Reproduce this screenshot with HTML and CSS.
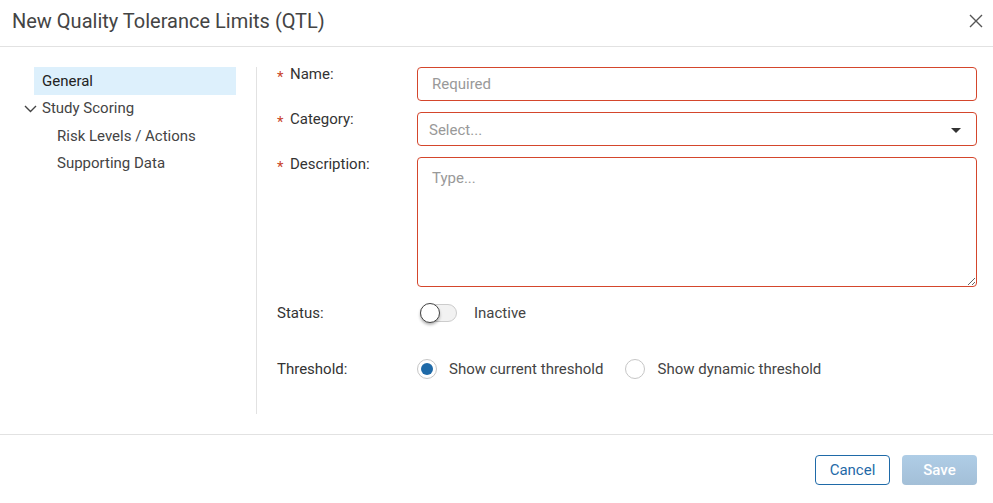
FILE: index.html
```html
<!DOCTYPE html>
<html lang="en">
<head>
  <meta charset="UTF-8">
  <title>New Quality Tolerance Limits (QTL)</title>
  <link rel="stylesheet" href="styles.css">
</head>
<body>
  <div class="dialog">
    <div class="dialog-header">
      <h1>New Quality Tolerance Limits (QTL)</h1>
      <button class="close-btn" aria-label="Close">
        <svg width="14" height="14" viewBox="0 0 14 14"><path d="M1 1L13 13M13 1L1 13" stroke="#555" stroke-width="1.4" fill="none"/></svg>
      </button>
    </div>

    <div class="dialog-body">
      <nav class="side-nav">
        <div class="nav-item active">General</div>
        <div class="nav-item parent">
          <svg class="chevron" width="13" height="8" viewBox="0 0 13 8"><path d="M1 1L6.5 6.5L12 1" stroke="#444" stroke-width="1.4" fill="none"/></svg>
          Study Scoring
        </div>
        <div class="nav-item child">Risk Levels / Actions</div>
        <div class="nav-item child">Supporting Data</div>
      </nav>

      <div class="form">
        <div class="row">
          <label class="field-label"><span class="req">*</span>Name:</label>
          <div class="control"><input class="text-input invalid" type="text" placeholder="Required"></div>
        </div>
        <div class="row">
          <label class="field-label"><span class="req">*</span>Category:</label>
          <div class="control">
            <div class="select invalid">
              <span class="placeholder">Select...</span>
              <span class="caret"></span>
            </div>
          </div>
        </div>
        <div class="row">
          <label class="field-label"><span class="req">*</span>Description:</label>
          <div class="control"><textarea class="textarea invalid" placeholder="Type..."></textarea></div>
        </div>
        <div class="row row-status">
          <label class="field-label plain">Status:</label>
          <div class="control inline">
            <span class="toggle"><span class="knob"></span></span>
            <span class="option-text">Inactive</span>
          </div>
        </div>
        <div class="row row-threshold">
          <label class="field-label plain">Threshold:</label>
          <div class="control inline">
            <span class="radio checked"></span>
            <span class="option-text">Show current threshold</span>
            <span class="radio"></span>
            <span class="option-text">Show dynamic threshold</span>
          </div>
        </div>
      </div>
    </div>

    <div class="dialog-footer">
      <button class="btn btn-outline">Cancel</button>
      <button class="btn btn-primary" disabled>Save</button>
    </div>
  </div>
</body>
</html>
```

FILE: styles.css
```css
body {
  margin: 0;
  font-family: Roboto, "Liberation Sans", Arial, sans-serif;
  font-size: 15px;
  color: #333;
  background: #fff;
}

.dialog {
  width: 993px;
  height: 503px;
  display: flex;
  flex-direction: column;
}

.dialog-header {
  height: 46px;
  border-bottom: 1px solid #e2e2e2;
  display: flex;
  align-items: center;
  justify-content: space-between;
  padding: 0 9px 0 12px;
}

.dialog-header h1 {
  margin: 0;
  font-size: 20px;
  font-weight: 400;
  color: #444;
  position: relative;
  top: -2px;
}

.close-btn {
  border: none;
  background: none;
  padding: 0;
  width: 16px;
  height: 16px;
  display: flex;
  align-items: center;
  justify-content: center;
  margin-top: -4px;
}

.dialog-body {
  flex: 1;
  display: flex;
  padding-top: 20px;
  border-bottom: 1px solid #e2e2e2;
}

.side-nav {
  width: 202px;
  padding-left: 34px;
  padding-right: 20px;
  border-right: 1px solid #e2e2e2;
  margin-bottom: 20px;
}

.nav-item {
  height: 27px;
  line-height: 27px;
  color: #444;
  padding-left: 8px;
  position: relative;
}

.nav-item.active {
  background: #ddf0fc;
  color: #222;
  height: 28px;
  line-height: 28px;
}

.nav-item.parent {
  color: #444;
  line-height: 26px;
}

.chevron {
  position: absolute;
  left: -10px;
  top: 10px;
}

.nav-item.child {
  padding-left: 23px;
  line-height: 29px;
}

.form {
  flex: 1;
  padding-left: 20px;
  padding-right: 16px;
}

.row {
  display: flex;
  margin-bottom: 11px;
}

.field-label {
  width: 140px;
  flex-shrink: 0;
  color: #333;
  padding-top: 0;
  line-height: 14px;
}

.req {
  color: #c9432a;
  display: inline-block;
  width: 13px;
  font-size: 15px;
  position: relative;
  top: 3px;
}

.control {
  flex: 1;
}

.text-input,
.select,
.textarea {
  box-sizing: border-box;
  width: 100%;
  border: 1px solid #d4462c;
  border-radius: 4px;
  font-family: inherit;
  font-size: 15px;
  background: #fff;
  outline: none;
}

.text-input {
  height: 34px;
  padding: 0 14px;
}

.text-input::placeholder,
.textarea::placeholder {
  color: #999;
}

.select {
  height: 34px;
  display: flex;
  align-items: center;
  justify-content: space-between;
  padding: 2px 15px 0 11px;
}

.placeholder {
  color: #999;
}

.caret {
  width: 0;
  height: 0;
  border-left: 5px solid transparent;
  border-right: 5px solid transparent;
  border-top: 5px solid #333;
}

.textarea {
  height: 130px;
  padding: 11px 14px;
  resize: vertical;
  display: block;
}

.row-status {
  margin-top: 5px;
  height: 30px;
  align-items: center;
}

.row-threshold {
  margin-top: 26px;
  height: 30px;
  align-items: center;
}

.row-status .field-label,
.row-threshold .field-label {
  line-height: 20px;
}

.inline {
  display: flex;
  align-items: center;
}

.toggle {
  width: 37px;
  height: 18px;
  border: 1px solid #ccc;
  border-radius: 10px;
  background: #f2f2f2;
  position: relative;
  margin-left: 3px;
  box-sizing: border-box;
}

.knob {
  position: absolute;
  left: -1px;
  top: -2px;
  width: 20px;
  height: 20px;
  box-sizing: border-box;
  border-radius: 50%;
  border: 1px solid #444;
  background: #fff;
  box-shadow: 0 2px 3px rgba(0, 0, 0, 0.3);
}

.option-text {
  color: #444;
  margin-left: 17px;
}

.radio {
  width: 20px;
  height: 20px;
  box-sizing: border-box;
  border: 1px solid #c6c6c6;
  border-radius: 50%;
  background: #fff;
  position: relative;
}

.radio + .option-text {
  margin-left: 12px;
}

.option-text + .radio {
  margin-left: 22px;
}

.radio.checked::after {
  content: "";
  position: absolute;
  left: 3px;
  top: 3px;
  width: 12px;
  height: 12px;
  border-radius: 50%;
  background: #1f6aa8;
}

.dialog-footer {
  height: 68px;
  display: flex;
  align-items: center;
  justify-content: flex-end;
  gap: 12px;
  padding-right: 16px;
  padding-top: 2px;
  box-sizing: border-box;
}

.btn {
  height: 30px;
  border-radius: 4px;
  font-family: inherit;
  font-size: 15px;
  padding: 0;
  cursor: pointer;
}

.btn-outline {
  width: 75px;
  border: 1px solid #1f6aa8;
  background: #fff;
  color: #1f6aa8;
}

.btn-primary {
  width: 75px;
  border: none;
  background: linear-gradient(#afcde6, #a3bfd7);
  color: #fff;
  font-weight: 500;
}
```
